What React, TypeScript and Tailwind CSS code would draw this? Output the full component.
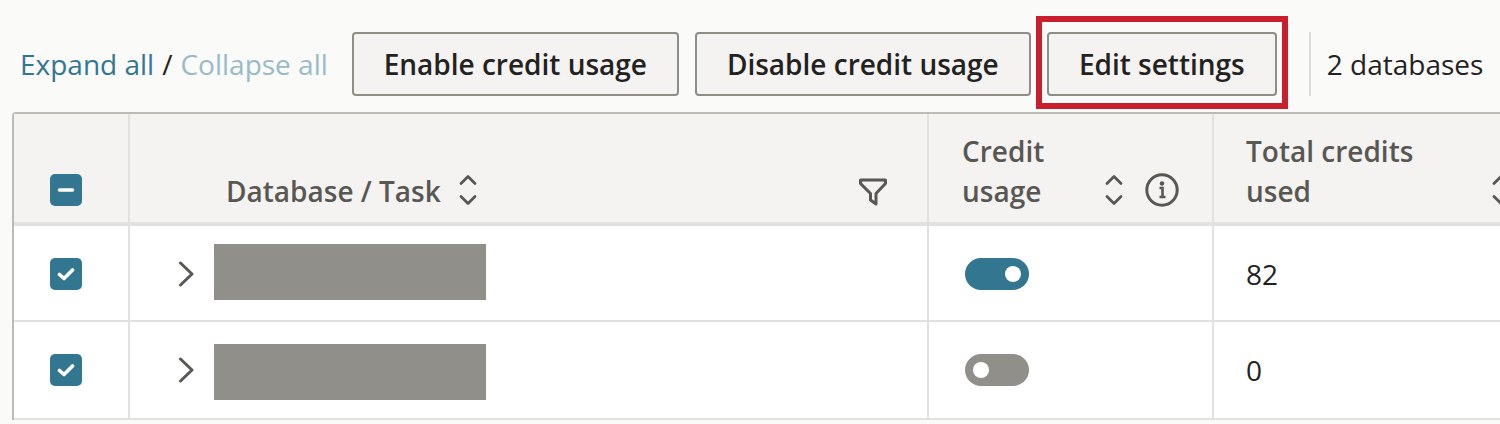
import React from 'react';

function SortIcon() {
  return (
    <svg className="w-[18px] h-[32px] shrink-0" viewBox="0 0 18 32" fill="none" stroke="#595752" strokeWidth="2.800" strokeLinecap="round" strokeLinejoin="round">
      <path d="M2 9.500 9 2.500l7 7" />
      <path d="M2 22.500 9 29.500l7-7" />
    </svg>
  );
}

function FilterIcon() {
  return (
    <svg className="w-[30px] h-[28px]" viewBox="0 0 30 28" fill="none" stroke="#595752" strokeWidth="3" strokeLinejoin="round" strokeLinecap="round">
      <path d="M2.500 2h25v3.500L18 15.500V26l-5.500-4v-6.500L2.500 5.500z" />
    </svg>
  );
}

function InfoIcon() {
  return (
    <svg className="w-[34px] h-[34px] shrink-0" viewBox="0 0 34 34" fill="none">
      <circle cx="17" cy="17" r="15.200" stroke="#595752" strokeWidth="3" />
      <circle cx="17" cy="10.500" r="2.200" fill="#595752" />
      <path d="M14.500 15H17.500V23M14.500 24H20.500" stroke="#595752" strokeWidth="2.600" />
    </svg>
  );
}

function Checkbox({ mixed }: { mixed?: boolean }) {
  return (
    <div className="w-8 h-8 rounded-[5px] bg-[#33768f] flex items-center justify-center">
      <svg className="w-[18px] h-[18px]" viewBox="0 0 18 18" fill="none" stroke="#ffffff" strokeWidth="3.600" strokeLinecap="round" strokeLinejoin="round">
        {mixed ? <path d="M2.500 9h13" /> : <path d="M2.500 9.500 7 13.500 15.500 5" />}
      </svg>
    </div>
  );
}

function Toggle({ on }: { on: boolean }) {
  return (
    <div className={`w-16 h-8 rounded-full flex items-center px-2 ${on ? 'bg-[#33768f] justify-end' : 'bg-[#918f89] justify-start'}`}>
      <div className="w-4 h-4 rounded-full bg-white" />
    </div>
  );
}

function ToolbarButton({ label, width }: { label: string; width: string }) {
  return (
    <button className={`${width} h-16 rounded-[4px] border-2 border-[#8f8d85] bg-[#f4f3f2] text-[28px] font-semibold text-[#23221f] flex items-center justify-center`}>
      {label}
    </button>
  );
}

function Row({ value, on, height, maskTop }: { value: string; on: boolean; height: string; maskTop: string }) {
  return (
    <div className={`flex ${height} border-b-2 border-[#e2e1df] bg-white`}>
      <div className="w-[116px] shrink-0 border-r-2 border-[#e2e1df] pl-[36px] pt-[32px]">
        <Checkbox />
      </div>
      <div className="w-[799px] shrink-0 border-r-2 border-[#e2e1df] flex items-start pl-[48px]">
        <svg className="w-[16px] h-[28px] mt-[34px]" viewBox="0 0 16 28" fill="none" stroke="#595752" strokeWidth="3" strokeLinecap="round" strokeLinejoin="round">
          <path d="M2.500 3 14 14 2.500 25" />
        </svg>
        <div className={`ml-[20px] w-[272px] h-[56px] bg-[#918f89] ${maskTop}`} />
      </div>
      <div className="w-[285px] shrink-0 border-r-2 border-[#e2e1df] pl-[36px] pt-[32px]">
        <Toggle on={on} />
      </div>
      <div className="flex-1 pl-[32px] pt-[28px] text-[28px] leading-[40px] text-[#23221f]">{value}</div>
    </div>
  );
}

export default function App() {
  return (
    <div className="w-[1500px] h-[424px] overflow-hidden bg-[#fafaf9] font-['Open_Sans',sans-serif]">
      <div className="flex items-center h-[112px] pt-[32px] pb-[16px] pl-[20px] text-[28px]">
        <span className="text-[#33768f]">Expand all</span>
        <span className="text-[#23221f] mx-[8px]">/</span>
        <span className="text-[#99bbc7]">Collapse all</span>
        <div className="ml-[24px] flex gap-4">
          <ToolbarButton label="Enable credit usage" width="w-[327px]" />
          <ToolbarButton label="Disable credit usage" width="w-[336px]" />
          <div className="relative">
            <ToolbarButton label="Edit settings" width="w-[230px]" />
            <div className="absolute left-[-11px] right-[-11px] top-[-16px] bottom-[-13px] border-[6px] border-[#c81e2d]" />
          </div>
        </div>
        <div className="ml-[32px] w-[2px] h-16 bg-[#dddcd9]" />
        <span className="ml-[16px] text-[#23221f] whitespace-nowrap">2 databases</span>
      </div>

      <div className="ml-[12px] w-[1500px] border-l-2 border-t-2 border-[#bdbbb5] rounded-tl-[4px] bg-white">
        <div className="flex h-[112px] border-b-[4px] border-[#e2e1df] bg-[#f4f3f2] text-[28px] leading-[40px] font-semibold text-[#595752]">
          <div className="w-[116px] shrink-0 border-r-2 border-[#e2e1df] pl-[36px] pt-[60px]">
            <Checkbox mixed />
          </div>
          <div className="w-[799px] shrink-0 border-r-2 border-[#e2e1df] flex items-end pl-[96px] pr-[39px] pb-[11px]">
            <span>Database / Task</span>
            <span className="ml-[18px] mb-[5px]"><SortIcon /></span>
            <span className="ml-auto mb-[5px]"><FilterIcon /></span>
          </div>
          <div className="w-[285px] shrink-0 border-r-2 border-[#e2e1df] flex items-end pl-[33px] pr-[33px] pb-[11px]">
            <span>Credit<br />usage</span>
            <span className="ml-auto mb-[5px]"><SortIcon /></span>
            <span className="ml-[22px] mb-[4px]"><InfoIcon /></span>
          </div>
          <div className="flex-1 flex items-end pl-[32px] pb-[11px]">
            <span>Total credits<br />used</span>
            <span className="ml-[79px] mb-[5px]"><SortIcon /></span>
          </div>
        </div>
        <Row value="82" on height="h-[96px]" maskTop="mt-[18px]" />
        <Row value="0" on={false} height="h-[98px]" maskTop="mt-[22px]" />
      </div>
    </div>
  );
}
